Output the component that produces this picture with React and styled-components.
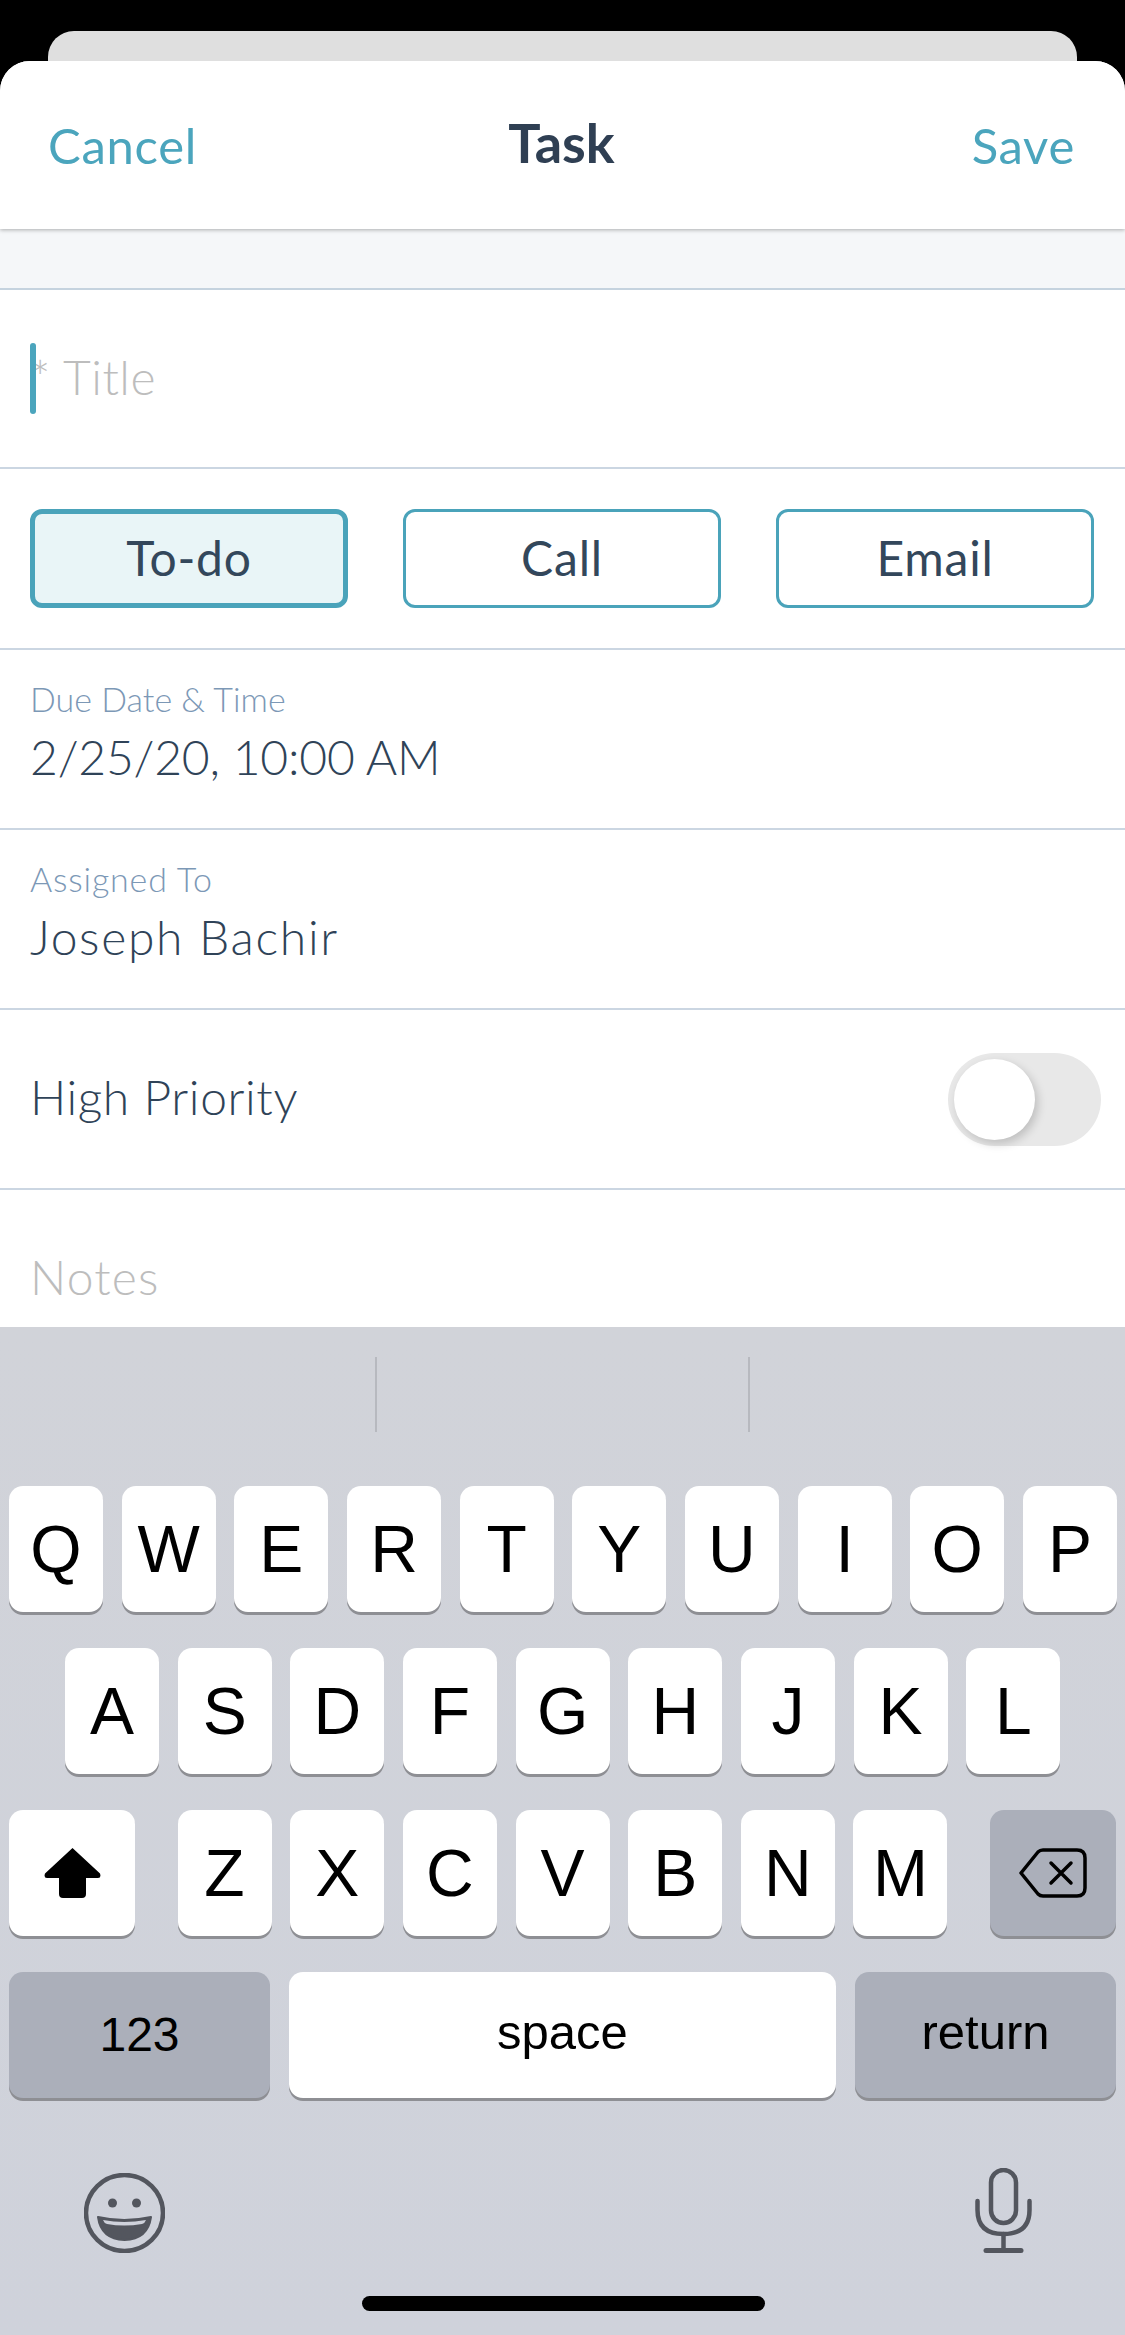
import React from "react";
import styled, { createGlobalStyle } from "styled-components";

const GlobalStyle = createGlobalStyle`
  html, body {
    margin: 0;
    padding: 0;
    background: #000;
  }
  * {
    box-sizing: border-box;
  }
`;

const Screen = styled.div`
  width: 1125px;
  height: 2335px;
  display: flex;
  flex-direction: column;
  background: #000;
  overflow: hidden;
  padding-top: 31px;
  font-family: Lato, "Open Sans", sans-serif;
`;

const BackCard = styled.div`
  height: 30px;
  flex: none;
  margin: 0 48px;
  background: #dfdfdf;
  border-radius: 26px 26px 0 0;
`;

const Sheet = styled.div`
  flex: 1;
  min-height: 0;
  display: flex;
  flex-direction: column;
  background: #fff;
  border-radius: 30px 30px 0 0;
  overflow: hidden;
`;

const Header = styled.div`
  position: relative;
  height: 168px;
  flex: none;
  display: grid;
  grid-template-columns: 1fr auto 1fr;
  align-items: center;
  padding: 0 50px 0 48px;
  background: #fff;
  box-shadow: 0 1px 4px rgba(0, 0, 0, 0.3);
  z-index: 1;
`;

const HeaderLink = styled.span`
  font-size: 49px;
  line-height: 1;
  color: #4ba5bd;
  letter-spacing: 0.7px;
  text-align: ${(props) => (props.$end ? "right" : "left")};
`;

const HeaderTitle = styled.span`
  font-size: 54px;
  line-height: 1;
  font-weight: 700;
  color: #2f3f53;
  margin-top: -4px;
`;

const Band = styled.div`
  height: 61px;
  flex: none;
  background: #f5f7f9;
  border-bottom: 2px solid #c5d3df;
`;

const Row = styled.div`
  position: relative;
  height: ${(props) => props.$height || 180}px;
  flex: none;
  display: flex;
  align-items: center;
  justify-content: space-between;
  padding: 0 24px 0 30px;
  border-bottom: 2px solid #cbd6e2;
`;

const Caret = styled.span`
  position: absolute;
  left: 30px;
  top: 53px;
  width: 6px;
  height: 71px;
  border-radius: 3px;
  background: #4ba5bd;
`;

const Placeholder = styled.span`
  font-size: 48px;
  font-weight: 300;
  color: #bdbdbd;
  letter-spacing: ${(props) => props.$spacing || 0}px;
  margin-top: ${(props) => props.$lift || 0}px;
`;

const TypeButtons = styled.div`
  width: 100%;
  display: flex;
  justify-content: space-between;
  padding-right: 7px;
`;

const TypeButton = styled.div`
  width: 318px;
  height: 99px;
  display: flex;
  align-items: center;
  justify-content: center;
  padding-bottom: 2px;
  border: ${(props) => (props.$active ? 5.5 : 3)}px solid #4aa3ba;
  border-radius: 12px;
  background: ${(props) => (props.$active ? "#e9f5f7" : "#fff")};
  font-size: 48px;
  letter-spacing: 0.8px;
  color: #33475b;
`;

const Field = styled.div`
  display: flex;
  flex-direction: column;
  margin-top: -13px;
`;

const FieldLabel = styled.span`
  font-size: 34px;
  line-height: 40px;
  margin-bottom: 9px;
  font-weight: 300;
  color: #7c98b6;
  letter-spacing: ${(props) => props.$spacing || 0}px;
`;

const FieldValue = styled.span`
  font-size: 48px;
  line-height: 58px;
  font-weight: 300;
  color: #2f4358;
  letter-spacing: ${(props) => props.$spacing || 0}px;
`;

const RowLabel = styled.span`
  font-size: 48px;
  font-weight: 300;
  color: #2f4358;
  letter-spacing: 0.6px;
  margin-top: -5px;
`;

const Toggle = styled.div`
  position: relative;
  width: 153px;
  height: 93px;
  border-radius: 47px;
  background: #e8e8e8;
`;

const ToggleKnob = styled.span`
  position: absolute;
  left: 6px;
  top: 6px;
  width: 81px;
  height: 81px;
  border-radius: 50%;
  background: #fff;
  box-shadow: 3px 4px 10px rgba(0, 0, 0, 0.18);
`;

const NotesArea = styled.div`
  flex: 1;
  padding: 58px 30px 0;
`;

const Keyboard = styled.div`
  height: 1008px;
  flex: none;
  display: flex;
  flex-direction: column;
  background: linear-gradient(#d1d3d9, #cfd2db);
`;

const Suggestions = styled.div`
  height: 159px;
  flex: none;
  display: flex;
  justify-content: center;
  gap: 371px;
  padding-top: 30px;
`;

const SuggestionDivider = styled.span`
  width: 2px;
  height: 75px;
  background: #b7b9bf;
`;

const KeyRows = styled.div`
  display: flex;
  flex-direction: column;
  gap: 36px;
  padding: 0 9px;
`;

const KeyRow = styled.div`
  display: flex;
  gap: ${(props) => props.$gap || 18.67}px;
  padding: 0 ${(props) => props.$inset || 0}px;
  justify-content: ${(props) => props.$justify || "flex-start"};
`;

const Key = styled.div`
  width: ${(props) => props.$width || 94}px;
  height: 126px;
  flex: ${(props) => (props.$grow ? 1 : "none")};
  display: flex;
  align-items: center;
  justify-content: center;
  padding-bottom: ${(props) => props.$lift || 0}px;
  border-radius: 14px;
  background: ${(props) => (props.$fn ? "#abafba" : "#fff")};
  box-shadow: 0 3px 0 #8e8f94;
  color: #000;
  font-family: "Liberation Sans", Arial, sans-serif;
  font-size: ${(props) => props.$size || 66}px;
  line-height: 1;
`;

const LetterGroup = styled.div`
  display: flex;
  gap: 18.67px;
`;

const BottomIcons = styled.div`
  flex: 1;
  display: flex;
  align-items: flex-start;
  justify-content: space-between;
  padding: 70px 93px 0 84px;
`;

const EmojiSlot = styled.div`
  margin-top: 5px;
  line-height: 0;
`;

const HomeBar = styled.div`
  position: absolute;
  left: 362px;
  top: 2296px;
  width: 403px;
  height: 15px;
  border-radius: 8px;
  background: #000;
`;

const ShiftIcon = () => (
  <svg width="57" height="50" viewBox="0 0 57 50">
    <path
      d="M28.5 0 L56 25.5 Q57.5 30 54 30 L42 30 L42 46 Q42 50 38 50 L19 50 Q15 50 15 46 L15 30 L3 30 Q-0.5 30 1 25.5 Z"
      fill="#000"
    />
  </svg>
);

const DeleteIcon = () => (
  <svg width="68" height="50" viewBox="0 0 68 50" fill="none" stroke="#000" strokeWidth="3.5" strokeLinejoin="round" strokeLinecap="round">
    <path d="M24 2 H58 Q66 2 66 10 V40 Q66 48 58 48 H24 Q21 48 19 46 L2 25 L19 4 Q21 2 24 2 Z" />
    <path d="M32 15 L52 35 M52 15 L32 35" />
  </svg>
);

const EmojiIcon = () => (
  <svg width="81" height="80" viewBox="0 0 81 80">
    <ellipse cx="40.5" cy="40" rx="38.5" ry="38" fill="none" stroke="#53565e" strokeWidth="4.5" />
    <circle cx="28.5" cy="30" r="4.5" fill="#53565e" />
    <circle cx="52.5" cy="30" r="4.5" fill="#53565e" />
    <path d="M14 44 Q40 50 67 44 Q64 66 40.5 67 Q17 66 14 44 Z" fill="#53565e" stroke="#53565e" strokeWidth="2" strokeLinejoin="round" />
    <path d="M19 47 Q40 51 62 47 Q61 50 58 51 Q40 54 23 51 Q20 50 19 47 Z" fill="#cfd2db" />
  </svg>
);

const MicIcon = () => (
  <svg width="57" height="85" viewBox="0 0 57 85" fill="none" stroke="#53565e" strokeWidth="4.5" strokeLinecap="round">
    <rect x="16" y="2" width="25" height="53" rx="12.5" />
    <path d="M2.5 33 V42 Q2.5 66 28.5 66 Q54.5 66 54.5 42 V33" />
    <path d="M28.5 66 V82" />
    <path d="M11 82.5 H46" strokeWidth="5" />
  </svg>
);

const rowOne = ["Q", "W", "E", "R", "T", "Y", "U", "I", "O", "P"];
const rowTwo = ["A", "S", "D", "F", "G", "H", "J", "K", "L"];
const rowThree = ["Z", "X", "C", "V", "B", "N", "M"];

const App = () => {
  return (
    <Screen>
      <GlobalStyle />
      <BackCard />
      <Sheet>
        <Header>
          <HeaderLink>Cancel</HeaderLink>
          <HeaderTitle>Task</HeaderTitle>
          <HeaderLink $end>Save</HeaderLink>
        </Header>
        <Band />
        <Row $height={179}>
          <Caret />
          <Placeholder $spacing={0.5} $lift={-5}>* Title</Placeholder>
        </Row>
        <Row $height={181}>
          <TypeButtons>
            <TypeButton $active>To-do</TypeButton>
            <TypeButton>Call</TypeButton>
            <TypeButton>Email</TypeButton>
          </TypeButtons>
        </Row>
        <Row $height={180}>
          <Field>
            <FieldLabel>Due Date &amp; Time</FieldLabel>
            <FieldValue $spacing={-0.2}>2/25/20, 10:00 AM</FieldValue>
          </Field>
        </Row>
        <Row $height={180}>
          <Field>
            <FieldLabel $spacing={0.8}>Assigned To</FieldLabel>
            <FieldValue $spacing={1.7}>Joseph Bachir</FieldValue>
          </Field>
        </Row>
        <Row $height={180}>
          <RowLabel>High Priority</RowLabel>
          <Toggle>
            <ToggleKnob />
          </Toggle>
        </Row>
        <NotesArea>
          <Placeholder $spacing={1.2}>Notes</Placeholder>
        </NotesArea>
        <Keyboard>
          <Suggestions>
            <SuggestionDivider />
            <SuggestionDivider />
          </Suggestions>
          <KeyRows>
            <KeyRow>
              {rowOne.map((k) => (
                <Key key={k}>{k}</Key>
              ))}
            </KeyRow>
            <KeyRow $inset={56}>
              {rowTwo.map((k) => (
                <Key key={k}>{k}</Key>
              ))}
            </KeyRow>
            <KeyRow $justify="space-between">
              <Key $width={126}>
                <ShiftIcon />
              </Key>
              <LetterGroup>
                {rowThree.map((k) => (
                  <Key key={k}>{k}</Key>
                ))}
              </LetterGroup>
              <Key $width={126} $fn>
                <DeleteIcon />
              </Key>
            </KeyRow>
            <KeyRow>
              <Key $width={261} $fn $size={48}>123</Key>
              <Key $grow $size={49} $lift={6}>space</Key>
              <Key $width={261} $fn $size={49} $lift={6}>return</Key>
            </KeyRow>
          </KeyRows>
          <BottomIcons>
            <EmojiSlot>
              <EmojiIcon />
            </EmojiSlot>
            <MicIcon />
          </BottomIcons>
        </Keyboard>
      </Sheet>
      <HomeBar />
    </Screen>
  );
};

export default App;
